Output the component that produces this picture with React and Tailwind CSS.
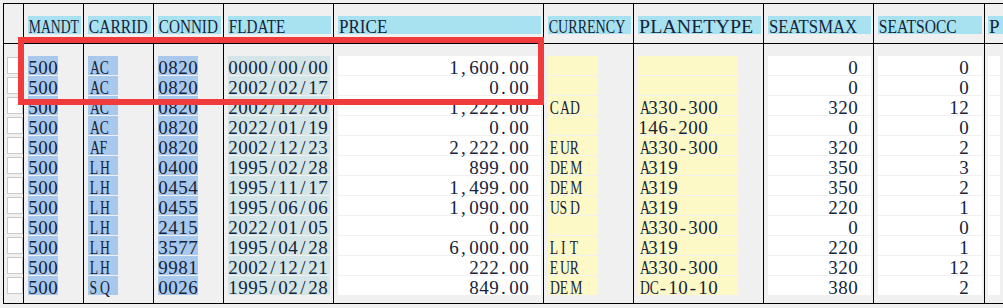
import React from 'react';

const rows = [
  ['500', 'AC', '0820', '0000/00/00', '1,600.00', '', '', '0', '0'],
  ['500', 'AC', '0820', '2002/02/17', '0.00', '', '', '0', '0'],
  ['500', 'AC', '0820', '2002/12/20', '1,222.00', 'CAD', 'A330-300', '320', '12'],
  ['500', 'AC', '0820', '2022/01/19', '0.00', '', '146-200', '0', '0'],
  ['500', 'AF', '0820', '2002/12/23', '2,222.00', 'EUR', 'A330-300', '320', '2'],
  ['500', 'LH', '0400', '1995/02/28', '899.00', 'DEM', 'A319', '350', '3'],
  ['500', 'LH', '0454', '1995/11/17', '1,499.00', 'DEM', 'A319', '350', '2'],
  ['500', 'LH', '0455', '1995/06/06', '1,090.00', 'USD', 'A319', '220', '1'],
  ['500', 'LH', '2415', '2022/01/05', '0.00', '', 'A330-300', '0', '0'],
  ['500', 'LH', '3577', '1995/04/28', '6,000.00', 'LIT', 'A319', '220', '1'],
  ['500', 'LH', '9981', '2002/12/21', '222.00', 'EUR', 'A330-300', '320', '12'],
  ['500', 'SQ', '0026', '1995/02/28', '849.00', 'DEM', 'DC-10-10', '380', '2'],
];

// column width includes its left border line
const columns = [
  { label: 'MANDT', width: 'w-[60px]', squeeze: 'scale-x-[0.72]', cell: 'w-[30px] bg-[#a8c8ec]' },
  { label: 'CARRID', width: 'w-[70px]', squeeze: 'scale-x-[0.82]', cell: 'w-[30px] bg-[#a8c8ec]' },
  { label: 'CONNID', width: 'w-[70px]', squeeze: 'scale-x-[0.8]', cell: 'w-[40px] bg-[#a8c8ec]' },
  { label: 'FLDATE', width: 'w-[110px]', squeeze: 'scale-x-[0.8]', cell: 'w-[102px] bg-[#d3e5e7]' },
  { label: 'PRICE', width: 'w-[210px]', squeeze: 'scale-x-[0.9]', cell: 'w-full bg-white justify-end pr-[12px]' },
  { label: 'CURRENCY', width: 'w-[90px]', squeeze: 'scale-x-[0.74]', cell: 'w-[50px] bg-[#fdf9c6]' },
  { label: 'PLANETYPE', width: 'w-[130px]', squeeze: 'scale-x-[1.05]', cell: 'w-[100px] bg-[#fdf9c6]' },
  { label: 'SEATSMAX', width: 'w-[110px]', squeeze: 'scale-x-[0.88]', cell: 'w-full bg-white justify-end pr-[13px]' },
  { label: 'SEATSOCC', width: 'w-[111px]', squeeze: 'scale-x-[0.82]', cell: 'w-full bg-white justify-end pr-[13px]' },
];

// SAP list font: every character sits in a 10px slot
const Mono = ({ text }) =>
  [...text].map((ch, i) => {
    if (ch === ',' || ch === '.') {
      return (
        <span key={i} className="inline-block w-[10px] pl-[2px] text-left">
          {ch}
        </span>
      );
    }
    return (
      <span key={i} className="inline-block w-[10px] text-center">
        {/[A-Z]/.test(ch) ? <span className="inline-block scale-x-[0.72]">{ch}</span> : ch}
      </span>
    );
  });

const HeaderLabel = ({ text, squeeze }) => (
  <div className="h-[18px] bg-[#a8e2f0] whitespace-nowrap">
    <span className={`inline-block origin-left ${squeeze} text-[19px] leading-[18px] pl-[1px]`}>{text}</span>
  </div>
);

const App = () => {
  return (
    <div className="w-[1003px] h-[308px] bg-[#f0f0f0] relative overflow-hidden pl-[3px] pt-[3px] text-[#15243a] font-['Liberation_Serif',serif]">
      <div className="flex border-t border-b border-black">
        {/* selection column */}
        <div className="w-[20px] flex flex-col border-l border-black">
          <div className="h-[40px] border-b border-black" />
          <div className="h-[259px] pt-[12px] pl-[3px]">
            {rows.map((r, i) => (
              <div key={i} className="h-[20px] pt-[1px]">
                <div className="w-[16px] h-[17px] bg-white border border-[#c9c9c9]" />
              </div>
            ))}
          </div>
        </div>

        {columns.map((col, c) => (
          <div key={col.label} className={`${col.width} flex flex-col border-l border-black`}>
            <div className="h-[40px] border-b border-black pt-[12px] pl-[4px] pr-[2px]">
              <HeaderLabel text={col.label} squeeze={col.squeeze} />
            </div>
            <div className="h-[259px] pt-[12px] pl-[4px] pr-[2px]">
              {rows.map((r, i) => (
                <div key={i} className="h-[20px]">
                  <div className={`${col.cell} h-[19px] flex whitespace-nowrap text-[19px] leading-[23px]`}>
                    <Mono text={r[c]} />
                  </div>
                </div>
              ))}
            </div>
          </div>
        ))}

        {/* cut-off column at the right edge */}
        <div className="flex-1 flex flex-col border-l border-black">
          <div className="h-[40px] border-b border-black pt-[12px] pl-[3px]">
            <HeaderLabel text="P" squeeze="scale-x-100" />
          </div>
          <div className="h-[259px] pt-[12px] pl-[3px] pr-[3px]">
            {rows.map((r, i) => (
              <div key={i} className="h-[20px]">
                <div className="w-full h-[19px] bg-white" />
              </div>
            ))}
          </div>
        </div>
      </div>

      {/* red highlight frame */}
      <div className="absolute left-[18px] top-[37px] w-[526px] h-[68px] border-[6px] border-[#ef3b3b]" />
    </div>
  );
};

export default App;
